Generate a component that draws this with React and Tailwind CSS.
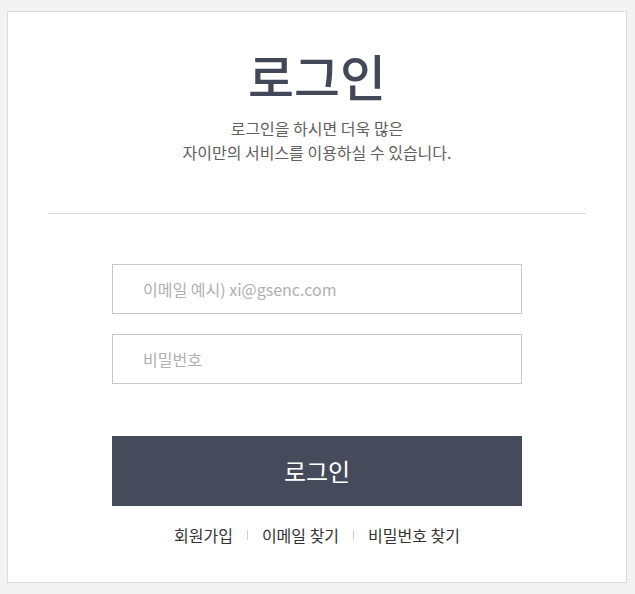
export default function App() {
  return (
    <div
      className="min-h-[594px] w-full bg-[#f3f3f3] pt-[11px] pl-[7px]"
      style={{ fontFamily: '"Noto Sans CJK KR", "Noto Sans", sans-serif' }}
    >
      <div className="w-[620px] h-[572px] bg-white border border-[#dcdcdc] flex flex-col items-center">
        {/* heading */}
        <h1 className="mt-[35px] text-[50px] leading-[56px] font-medium text-[#434859]">로그인</h1>
        <p className="mt-[13px] text-[16px] leading-[24px] text-[#606060] text-center">
          로그인을 하시면 더욱 많은
          <br />
          자이만의 서비스를 이용하실 수 있습니다.
        </p>

        <div className="mt-[49px] w-[538px] h-px bg-[#dddddd]" />

        {/* form */}
        <div className="mt-[50px] w-[410px] flex flex-col">
          <input
            type="text"
            placeholder="이메일 예시) xi@gsenc.com"
            className="h-[50px] border border-[#c8c8c8] px-[30px] text-[16px] text-[#333] placeholder:text-[#b0b0b0] outline-none"
          />
          <input
            type="password"
            placeholder="비밀번호"
            className="mt-[20px] h-[50px] border border-[#c8c8c8] px-[30px] text-[16px] text-[#333] placeholder:text-[#b0b0b0] outline-none"
          />
          <button className="mt-[52px] h-[70px] bg-[#464b5c] text-white text-[24px]">로그인</button>
        </div>

        {/* links */}
        <div className="mt-[17px] flex items-center text-[16px] text-[#333]">
          <a className="cursor-pointer">회원가입</a>
          <span className="mx-[14px] w-px h-[10px] bg-[#d0d0d0]" />
          <a className="cursor-pointer">이메일 찾기</a>
          <span className="mx-[14px] w-px h-[10px] bg-[#d0d0d0]" />
          <a className="cursor-pointer">비밀번호 찾기</a>
        </div>
      </div>
    </div>
  );
}
